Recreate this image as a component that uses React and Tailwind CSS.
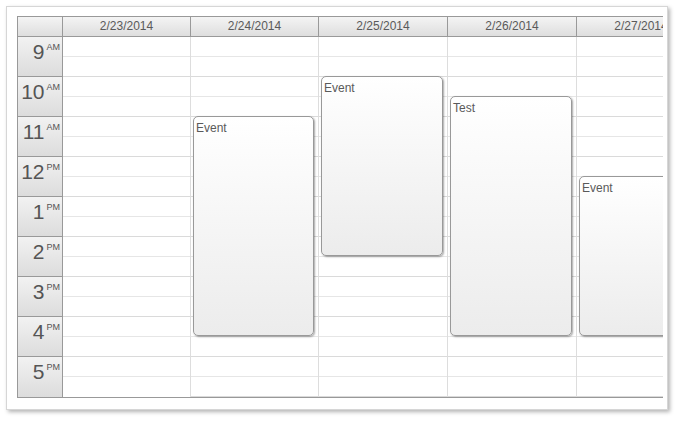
import React from 'react';

const days = [
  { label: '2/23/2014', width: 128 },
  { label: '2/24/2014', width: 128 },
  { label: '2/25/2014', width: 129 },
  { label: '2/26/2014', width: 129 },
  { label: '2/27/2014', width: 129 },
];

const hours = [
  { h: '9', p: 'AM' },
  { h: '10', p: 'AM' },
  { h: '11', p: 'AM' },
  { h: '12', p: 'PM' },
  { h: '1', p: 'PM' },
  { h: '2', p: 'PM' },
  { h: '3', p: 'PM' },
  { h: '4', p: 'PM' },
  { h: '5', p: 'PM' },
];

// start/end are half-hour slots counted from 9 AM
const events = [
  { day: 1, start: 4, end: 15, text: 'Event' },
  { day: 2, start: 2, end: 11, text: 'Event' },
  { day: 3, start: 3, end: 15, text: 'Test' },
  { day: 4, start: 7, end: 15, text: 'Event' },
];

const SLOT = 20;

function EventBox({ ev, width }) {
  return (
    <div
      className="absolute left-[2px] z-10 rounded-[5px] border border-[#999] bg-gradient-to-b from-white to-[#ececec] shadow-[1px_1px_2px_rgba(0,0,0,0.35)] px-[2px] pt-[4px] text-[12px] leading-[14px] text-[#5a5a5a]"
      style={{ top: ev.start * SLOT - 1, height: (ev.end - ev.start) * SLOT, width: width - 7 }}
    >
      {ev.text}
    </div>
  );
}

export default function App() {
  const slots = Array.from({ length: hours.length * 2 });

  return (
    <div className="w-[678px] h-[421px] bg-white pl-[6px] pt-[6px] font-['Liberation_Sans',Arial,sans-serif]">
      <div className="w-[662px] h-[404px] border border-[#d6d6d6] bg-white pl-[10px] pt-[9px] shadow-[2px_2px_4px_rgba(0,0,0,0.3)]">
        <div className="w-[646px] overflow-hidden border-t border-l border-b border-[#999]">
          {/* header row */}
          <div className="flex h-[20px] border-b border-[#999]">
            <div className="w-[45px] shrink-0 border-r border-[#999] bg-gradient-to-b from-[#f4f4f4] to-[#dedede]" />
            {days.map((d) => (
              <div
                key={d.label}
                className="shrink-0 overflow-hidden whitespace-nowrap border-r border-[#999] bg-gradient-to-b from-[#f4f4f4] to-[#dedede] text-center text-[12px] leading-[19px] text-[#5a5a5a]"
                style={{ width: d.width }}
              >
                {d.label}
              </div>
            ))}
          </div>

          {/* body */}
          <div className="flex">
            <div className="w-[45px] shrink-0 border-r border-[#999]">
              {hours.map((t) => (
                <div
                  key={t.h + t.p}
                  className="flex h-[40px] justify-end border-b border-[#999] bg-gradient-to-b from-[#f2f2f2] to-[#dcdcdc] pr-[2px] pt-[3px] text-[#555] last:border-b-0"
                >
                  <span className="text-[21px] leading-[24px]">{t.h}</span>
                  <span className="ml-[2px] text-[9px] leading-[15px]">{t.p}</span>
                </div>
              ))}
            </div>
            {days.map((d, di) => (
              <div key={d.label} className="relative shrink-0 border-r border-[#ddd]" style={{ width: d.width }}>
                {slots.map((_, i) => (
                  <div
                    key={i}
                    className={
                      i % 2 === 0
                        ? 'h-[20px] border-b border-[#e6e6e6]'
                        : 'h-[20px] border-b border-[#dadada] last:border-b-0'
                    }
                  />
                ))}
                {events
                  .filter((ev) => ev.day === di)
                  .map((ev) => (
                    <EventBox key={ev.day + ev.text} ev={ev} width={d.width} />
                  ))}
              </div>
            ))}
          </div>
        </div>
      </div>
    </div>
  );
}
